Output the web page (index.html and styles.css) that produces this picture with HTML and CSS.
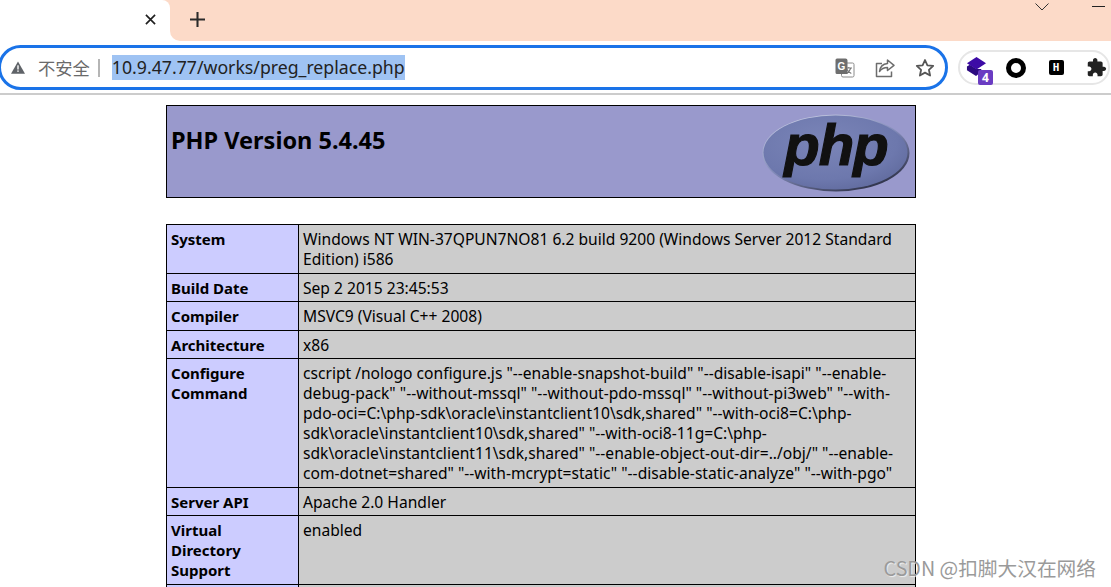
FILE: index.html
```html
<!DOCTYPE html>
<html lang="zh">
<head>
<meta charset="utf-8">
<title>phpinfo()</title>
<link rel="stylesheet" href="styles.css">
</head>
<body>
<header class="chrome">
  <div class="tabstrip">
    <div class="tab">
      <svg class="tab-close" viewBox="0 0 12 12"><path d="M1 1l10 10M11 1L1 11"/></svg>
    </div>
    <div class="strip-rest">
      <svg class="tab-new" viewBox="0 0 16 16"><path d="M8 0v16M0 8h16"/></svg>
      <div class="win-controls">
        <svg class="win-chev" viewBox="0 0 14 8"><path d="M.5.5L7 7l6.500-6.500"/></svg>
        <span class="win-min"></span>
      </div>
    </div>
  </div>
  <div class="toolbar">
    <div class="omnibox">
      <svg class="warn" viewBox="0 0 16 14"><path d="M8 0l8 14H0z"/><rect class="warn-mark" x="7.200" y="4.500" width="1.600" height="4.800"/><rect class="warn-mark" x="7.200" y="10.300" width="1.600" height="1.700"/></svg>
      <span class="insecure">不安全</span>
      <span class="sep"></span>
      <span class="url">10.9.47.77/works/preg_replace.php</span>
      <div class="omni-icons">
        <svg class="ico" viewBox="0 0 20 20"><rect class="tr-back" x="6.500" y="5" width="12.500" height="14" rx="1.500"/><path class="tr-x" d="M10.500 10h6.500M13.800 9v1M15.800 10c-.7 2.500-2.300 4.300-4.300 5.500M12 11.500c.8 1.600 2.300 3 4.300 4"/><path class="tr-front" d="M2 .5h8.500a2 2 0 0 1 2 2v13.500H2a1.500 1.500 0 0 1-1.500-1.500V2A1.500 1.500 0 0 1 2 .5z"/><text class="tr-g" x="6.300" y="11.500">G</text></svg>
        <svg class="ico" viewBox="0 0 20 20"><path class="ln" d="M7 5.500H1.500v13h15v-5"/><path class="ln" d="M12.500 2l6.500 5.300-6.500 5.200V9.500c-3.500 0-6 1-8 4 .5-4.500 3.500-7.500 8-8z"/></svg>
        <svg class="ico" viewBox="0 0 20 20"><path class="star" d="M10 2l2.400 5.300 5.800.6-4.300 3.900 1.200 5.700L10 14.600l-5.100 2.900 1.200-5.700-4.300-3.900 5.800-.6z"/></svg>
      </div>
    </div>
    <div class="ext-pill">
      <div class="ext">
        <svg class="ext-svg" viewBox="0 0 22 22"><path class="st-b" d="M1 10l3-2 7 4.500 5 0v3L10.500 20 1 14z"/><path class="st-a" d="M11 0l10 6.500L11 13 1 6.500z"/></svg>
        <span class="badge">4</span>
      </div>
      <div class="ext"><span class="ring"></span></div>
      <div class="ext"><span class="hbox">H</span></div>
      <div class="ext">
        <svg class="ext-svg" viewBox="0 0 24 24"><path class="puzzle" d="M20.500 11H19V7c0-1.100-.9-2-2-2h-4V3.500C13 2.120 11.880 1 10.500 1S8 2.120 8 3.500V5H4c-1.100 0-1.990.9-1.990 2v3.800H3.500c1.490 0 2.700 1.210 2.700 2.700s-1.210 2.700-2.700 2.700H2V20c0 1.100.9 2 2 2h3.800v-1.500c0-1.490 1.210-2.700 2.700-2.700 1.490 0 2.700 1.210 2.700 2.700V22H17c1.100 0 2-.9 2-2v-4h1.500c1.380 0 2.500-1.120 2.500-2.500S21.880 11 20.500 11z"/></svg>
      </div>
    </div>
  </div>
</header>

<main class="page">
  <div class="php-head">
    <h1>PHP Version 5.4.45</h1>
    <svg class="php-logo" viewBox="0 0 150 80">
      <defs>
        <radialGradient id="oval" cx="0.42" cy="0.36" r="0.72">
          <stop offset="0" stop-color="#7b85b8"/>
          <stop offset="0.7" stop-color="#6d78ad"/>
          <stop offset="1" stop-color="#5f699c"/>
        </radialGradient>
        <linearGradient id="rim" x1="0.2" y1="0.05" x2="0.8" y2="0.95">
          <stop offset="0" stop-color="#c4c9e2"/>
          <stop offset="0.5" stop-color="#7f88b6"/>
          <stop offset="1" stop-color="#2c2f45"/>
        </linearGradient>
      </defs>
      <ellipse cx="75" cy="40" rx="73.500" ry="38.500" fill="url(#rim)"/>
      <ellipse cx="74.500" cy="39.500" rx="72" ry="37" fill="url(#oval)"/>
      <text class="php-word" x="75" y="52">php</text>
    </svg>
  </div>

  <table class="info">
    <tbody>
      <tr><th>System</th><td>Windows NT WIN-37QPUN7NO81 6.2 build 9200 (Windows Server 2012 Standard<br>Edition) i586</td></tr>
      <tr><th>Build Date</th><td>Sep 2 2015 23:45:53</td></tr>
      <tr><th>Compiler</th><td>MSVC9 (Visual C++ 2008)</td></tr>
      <tr><th>Architecture</th><td>x86</td></tr>
      <tr><th>Configure<br>Command</th><td>cscript /nologo configure.js "--enable-snapshot-build" "--disable-isapi" "--enable-<br>debug-pack" "--without-mssql" "--without-pdo-mssql" "--without-pi3web" "--with-<br>pdo-oci=C:\php-sdk\oracle\instantclient10\sdk,shared" "--with-oci8=C:\php-<br>sdk\oracle\instantclient10\sdk,shared" "--with-oci8-11g=C:\php-<br>sdk\oracle\instantclient11\sdk,shared" "--enable-object-out-dir=../obj/" "--enable-<br>com-dotnet=shared" "--with-mcrypt=static" "--disable-static-analyze" "--with-pgo"</td></tr>
      <tr><th>Server API</th><td>Apache 2.0 Handler</td></tr>
      <tr><th>Virtual<br>Directory<br>Support</th><td>enabled</td></tr>
      <tr><th>&nbsp;</th><td>&nbsp;</td></tr>
    </tbody>
  </table>
</main>

<div class="watermark">CSDN @扣脚大汉在网络</div>
</body>
</html>
```
FILE: styles.css
```css
* { box-sizing: border-box; }
html, body { margin: 0; height: 100%; overflow: hidden; background: #fff; }
body { position: relative; font-family: "Noto Sans", "Noto Sans CJK SC", sans-serif; color: #000; }

.chrome { display: flex; flex-direction: column; height: 95px; border-bottom: 2px solid #ccc; background: #fff; }

.tabstrip { display: flex; height: 41px; }
.tab {
  width: 170px; display: flex; justify-content: flex-end; align-items: center;
  padding-right: 14px; padding-bottom: 2px;
  background: #fcdac8;
  position: relative;
}
.tab::after {
  content: ""; position: absolute; inset: 0; background: #fff;
  border-top-right-radius: 8px;
}
.tab-close { width: 11px; height: 11px; position: relative; z-index: 1; }
.tab-close path { stroke: #1f1f1f; stroke-width: 1.800; fill: none; }

.strip-rest {
  flex: 1; display: flex; align-items: center; justify-content: space-between;
  padding: 0 0 2px 20px; background: #fcdac8; border-bottom-left-radius: 10px;
}
.tab-new { width: 15px; height: 15px; }
.tab-new path { stroke: #2a2a2a; stroke-width: 2.200; fill: none; }
.win-controls { display: flex; align-self: flex-start; padding: 3px 6px 0 0; gap: 43px; }
.win-chev { width: 14px; height: 8px; }
.win-chev path { stroke: #333; stroke-width: 1; fill: none; }
.win-min { width: 13px; height: 1px; margin-top: 3px; background: #222; }

.toolbar { flex: 1; display: flex; align-items: flex-start; padding-top: 4px; }
.omnibox {
  width: 950px; height: 45px; margin-left: -2px; flex: none;
  display: flex; align-items: center; padding: 0 10px 0 10px;
  border: 3px solid #1a73e8; border-radius: 23px; background: #fff;
}
.warn { width: 14px; height: 13px; flex: none; }
.warn path { fill: #5f6368; }
.warn .warn-mark { fill: #fff; }
.insecure { margin-left: 13px; font-size: 17.300px; color: #6a6a6a; font-family: "Noto Sans CJK SC", sans-serif; line-height: 1; }
.sep { width: 2px; height: 18px; margin: 0 12px 0 8px; background: #b5b5b5; flex: none; }
.url {
  font-family: "Noto Sans", sans-serif; font-size: 17.700px; line-height: 25px; color: #222;
  background: #9fc3f3;
}
.omni-icons { margin-left: auto; display: flex; gap: 20px; align-items: center; }
.ico { width: 20px; height: 20px; flex: none; }
.ln { fill: none; stroke: #6d6d6d; stroke-width: 1.500; stroke-linejoin: round; }
.star { fill: none; stroke: #555; stroke-width: 1.800; stroke-linejoin: round; }
.tr-back { fill: #fff; stroke: #8a8a8a; stroke-width: 1; }
.tr-x { stroke: #777; stroke-width: 1.100; fill: none; }
.tr-front { fill: #6e6e6e; }
.tr-g { fill: #fff; font: bold 10px "Liberation Sans", sans-serif; text-anchor: middle; }

.ext-pill {
  margin: 5px 0 0 10px; height: 35px; width: 152px; flex: none;
  display: flex; align-items: center; gap: 16px; padding-left: 4px;
  border: 2px solid #e6e6e6; border-radius: 18px;
}
.ext { width: 24px; height: 24px; flex: none; display: flex; align-items: center; justify-content: center; position: relative; }
.ext-svg { width: 21px; height: 21px; }
.st-a { fill: #3d0ba6; }
.st-b { fill: #2c0a80; }
.puzzle { fill: #222; }
.badge {
  position: absolute; left: 14px; top: 14px; width: 15px; height: 15px;
  background: #6a3cc2; color: #fff; border-radius: 2px; font: bold 12px/15px "Noto Sans", sans-serif; text-align: center;
}
.ring { width: 20px; height: 20px; border: 5px solid #000; border-radius: 50%; }
.hbox { width: 15px; height: 15px; background: #000; color: #fff; border-radius: 2px; font: bold 11px/15px "DejaVu Sans Mono", monospace; text-align: center; }

.page { width: 750px; margin-left: 166px; padding-top: 10px; }
.php-head {
  height: 93px; display: flex; justify-content: space-between; align-items: flex-start;
  padding: 0 5px 0 4px; border: 1px solid #000; background: #9999cc;
}
.php-head h1 { margin: 17px 0 0; font-size: 23.500px; line-height: 34px; font-weight: 700; }
.php-logo { width: 150px; height: 80px; margin: 7px -1px 0 0; flex: none; }
.php-word {
  font: italic 700 58px "Liberation Sans", sans-serif; text-anchor: middle;
  fill: #111; stroke: #111; stroke-width: 1.200; letter-spacing: -1px;
}

.info { width: 750px; margin-top: 26px; border-collapse: collapse; table-layout: fixed; font-size: 15px; line-height: 20px; }
.info th, .info td { border: 1px solid #000; padding: 4px 4px 3.570px; vertical-align: top; text-align: left; white-space: nowrap; }
.info th { width: 132px; background: #ccccff; font-weight: 700; }
.info td { background: #cccccc; font-size: 15.600px; }

.watermark {
  position: absolute; right: 15px; bottom: 7px;
  font: 19.700px/24px "Noto Sans CJK SC", "Noto Sans", sans-serif;
  color: #9a9a9a; text-shadow: 1px 1px 1px rgba(255,255,255,.7);
}
```
